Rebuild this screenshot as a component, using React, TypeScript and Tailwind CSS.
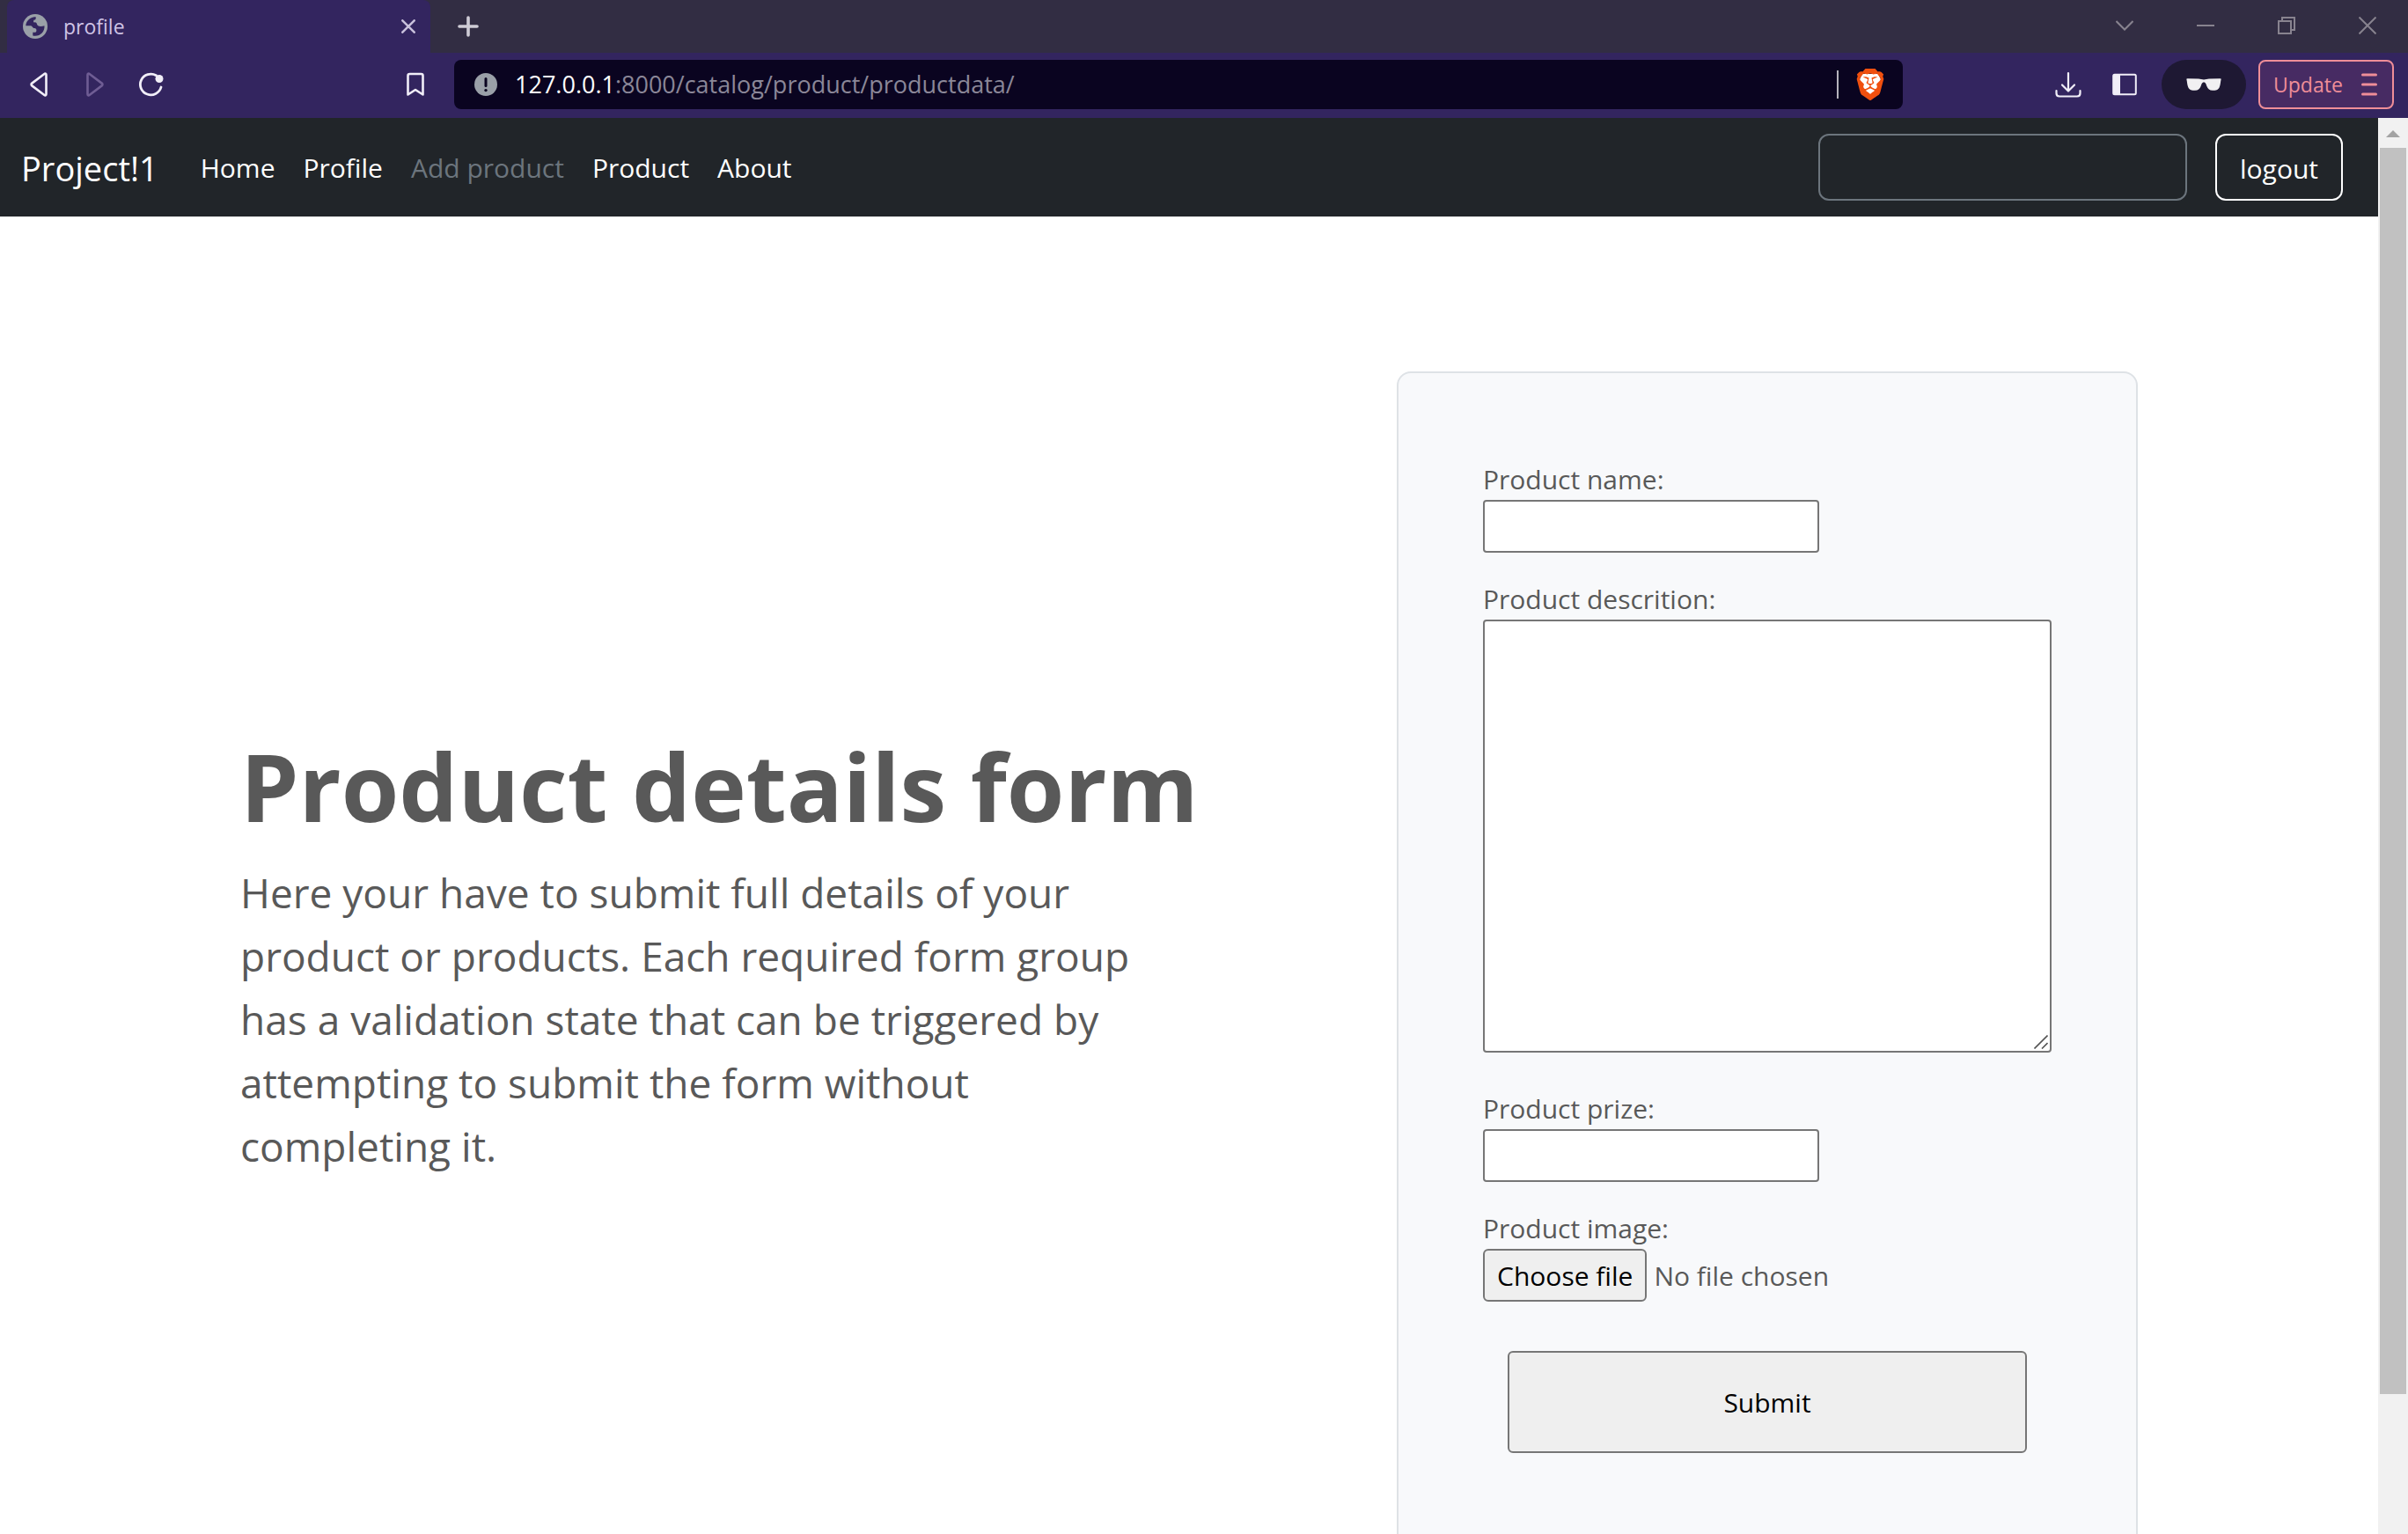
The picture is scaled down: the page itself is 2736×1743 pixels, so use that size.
import React from "react";
import { SiBrave } from "react-icons/si";

function GlobeIcon() {
  return (
    <svg viewBox="0 0 28 28" className="size-7" aria-hidden="true">
      <circle cx="14" cy="14" r="14" fill="#9aa0a8" />
      <path
        d="M3.3 13.2C3.6 8.500 7.200 4.400 12 3.500C13 3.300 14 3.300 14.800 3.400L14.600 5.200C14.500 6.300 13.600 6.600 12.300 6.700L12 9.200L14.800 9.500C16.200 10 15.600 12.400 17.200 13.200C19.600 14.400 22 13.800 24.500 13.200C25 19.500 20.200 24.800 14 24.800C12.600 24.800 11.600 24.600 11.300 24.500V20.800H14.200C15.400 20.400 15.600 18.800 15.300 17.600C15 16.400 13.600 16 12.400 16C11.200 15.900 10.800 13.600 9 13.300Z"
        fill="#33255f"
      />
    </svg>
  );
}

function ReloadIcon() {
  return (
    <svg viewBox="0 0 28 28" className="size-7" fill="none" aria-hidden="true">
      <path d="M25 17A12 11.800 0 1 1 19.500 3.800" stroke="#f1eef8" strokeWidth="2.800" strokeLinecap="round" />
      <circle cx="23" cy="7.500" r="4.500" fill="#f1eef8" />
    </svg>
  );
}

function TriangleIcon({ className }: { className: string }) {
  return (
    <svg viewBox="0 0 20 28" className={className} fill="none" aria-hidden="true">
      <path
        d="M18.500 3V25C18.500 26.200 17.300 26.700 16.400 26L2.300 15.400C1.300 14.600 1.300 13.400 2.300 12.600L16.400 2C17.300 1.300 18.500 1.800 18.500 3Z"
        stroke="currentColor"
        strokeWidth="2.600"
        strokeLinejoin="round"
      />
    </svg>
  );
}

function BookmarkIcon() {
  return (
    <svg viewBox="0 0 20 28" className="h-7 w-5" fill="none" aria-hidden="true">
      <path d="M1.500 25.500V4Q1.500 2 3.500 2H16.500Q18.500 2 18.500 4V25.500L10 20Z" stroke="#f1eef8" strokeWidth="2.600" strokeLinejoin="round" />
    </svg>
  );
}

function InfoIcon() {
  return (
    <svg viewBox="0 0 26 26" className="size-[26px] shrink-0" aria-hidden="true">
      <circle cx="13" cy="13" r="13" fill="#9aa0a8" />
      <path d="M13 6.500V14.500" stroke="#0a0420" strokeWidth="3" strokeLinecap="round" />
      <circle cx="13" cy="19.600" r="1.700" fill="#0a0420" />
    </svg>
  );
}

function BraveLogo() {
  return (
    <span className="relative block h-9 w-9 shrink-0 text-[#f0500f]">
      <svg viewBox="0 0 24 24" className="absolute inset-0 size-9" aria-hidden="true">
        <path d="M6 4H18L20 8L17.500 17L12 21L6.500 17L4 8Z" fill="#fff" />
      </svg>
      <SiBrave className="absolute inset-0 size-9" aria-hidden="true" />
    </span>
  );
}

function DownloadIcon() {
  return (
    <svg viewBox="0 0 30 30" className="size-[30px]" fill="none" stroke="#f1eef8" strokeWidth="2.200" strokeLinecap="round" strokeLinejoin="round" aria-hidden="true">
      <path d="M15 2V22M8 15.500L15 22.500L22 15.500M1.500 22V25Q1.500 28.500 5 28.500H25Q28.500 28.500 28.500 25V22" />
    </svg>
  );
}

function SidebarIcon() {
  return (
    <svg viewBox="0 0 28 26" className="h-[26px] w-7" aria-hidden="true">
      <rect x="1.200" y="1.700" width="25.600" height="22.600" rx="1.500" fill="none" stroke="#f1eef8" strokeWidth="2" />
      <rect x="1" y="1.500" width="8" height="23" fill="#f1eef8" />
    </svg>
  );
}

function GlassesIcon() {
  return (
    <svg viewBox="0 0 40 14" className="h-[14px] w-10" fill="#f1f0f2" aria-hidden="true">
      <path d="M0.300 0.800Q0.400 0.200 1.500 0.200L14 0.400Q17 0.700 20 1.600Q23 0.700 26 0.400L38.500 0.200Q39.600 0.200 39.700 0.800L39.200 3.200C38.900 6 38.400 8.500 37.700 10.200C36.400 13.300 33.500 13.800 30 13.800C26.500 13.800 24.600 11.800 23.400 9C22.600 7 22.300 4.400 20 4.400C17.700 4.400 17.400 7 16.600 9C15.400 11.800 13.500 13.800 10 13.800C6.500 13.800 3.600 13.300 2.300 10.200C1.600 8.500 1.100 6 0.800 3.200Z" />
    </svg>
  );
}

function TabStrip() {
  return (
    <div className="flex h-[60px] items-stretch bg-[#322d43]">
      <div className="ml-2 flex w-[481px] items-center rounded-t-lg bg-[#33255f] pr-[17px] pl-[18px]">
        <GlobeIcon />
        <span className="ml-[18px] flex-1 text-[23px] font-medium text-[#cfc3e6]">profile</span>
        <button type="button" aria-label="Close tab" className="text-[#c9c1dc]">
          <svg viewBox="0 0 16 16" className="size-4" fill="none" stroke="currentColor" strokeWidth="2.500" strokeLinecap="round" aria-hidden="true">
            <path d="M1.300 1.300L14.700 14.700M14.700 1.300L1.300 14.700" />
          </svg>
        </button>
      </div>
      <button type="button" aria-label="New tab" className="ml-[31px] text-[#cfccd6]">
        <svg viewBox="0 0 24 24" className="size-6" fill="none" stroke="currentColor" strokeWidth="3.600" strokeLinecap="round" aria-hidden="true">
          <path d="M12 2V22M2 12H22" />
        </svg>
      </button>
      <div className="ml-auto flex items-center gap-[72px] pr-9 pb-0.5 text-[#88838f]">
        <button type="button" aria-label="Search tabs">
          <svg viewBox="0 0 20 20" className="size-5" fill="none" stroke="currentColor" strokeWidth="2" aria-hidden="true">
            <path d="M0.500 5L10 14.500L19.500 5" />
          </svg>
        </button>
        <button type="button" aria-label="Minimize">
          <svg viewBox="0 0 20 20" className="size-5" stroke="currentColor" strokeWidth="2" aria-hidden="true">
            <path d="M0 10H20" />
          </svg>
        </button>
        <button type="button" aria-label="Restore">
          <svg viewBox="0 0 20 20" className="size-5" fill="none" stroke="currentColor" strokeWidth="2" aria-hidden="true">
            <path d="M1 5H15V19H1ZM5 5V1H19V15H15" />
          </svg>
        </button>
        <button type="button" aria-label="Close">
          <svg viewBox="0 0 20 20" className="size-5" fill="none" stroke="currentColor" strokeWidth="2" aria-hidden="true">
            <path d="M0.500 0.500L19.500 19.500M19.500 0.500L0.500 19.500" />
          </svg>
        </button>
      </div>
    </div>
  );
}

function Toolbar() {
  return (
    <div className="flex h-[74px] items-center bg-[#33255f] pr-4 pb-0.5 pl-[34px]">
      <button type="button" aria-label="Back" className="text-[#f1eef8]">
        <TriangleIcon className="h-7 w-5" />
      </button>
      <button type="button" aria-label="Forward" className="ml-11 text-[#6f5d94]">
        <TriangleIcon className="h-7 w-5 -scale-x-100" />
      </button>
      <button type="button" aria-label="Reload" className="ml-10">
        <ReloadIcon />
      </button>
      <div className="flex-[16]" />
      <button type="button" aria-label="Bookmark this page">
        <BookmarkIcon />
      </button>
      <div className="ml-[34px] flex h-14 flex-[93] items-center rounded-lg bg-[#0a0420] pr-[19px] pl-[23px]">
        <InfoIcon />
        <p className="ml-5 flex-1 text-[27px] text-[#8b8798]">
          <span className="text-white">127.0.0.1</span>:8000/catalog/product/productdata/
        </p>
        <span className="mr-[18px] h-8 w-0.5 bg-[#b5b3bc]" />
        <BraveLogo />
      </div>
      <div className="flex-[10]" />
      <button type="button" aria-label="Downloads">
        <DownloadIcon />
      </button>
      <button type="button" aria-label="Sidebar" className="ml-[35px]">
        <SidebarIcon />
      </button>
      <span className="ml-7 flex h-14 w-24 items-center justify-center rounded-full bg-[#1e1833]">
        <GlassesIcon />
      </span>
      <button
        type="button"
        className="ml-[14px] flex h-14 w-[154px] items-center justify-between rounded-lg border-2 border-[#ef8e98] bg-[#472b63] pr-[17px] pl-[15px] text-[23px] text-[#ef8e98]"
      >
        Update
        <svg viewBox="0 0 18 26" className="h-[26px] w-[18px]" stroke="currentColor" strokeWidth="3" strokeLinecap="round" aria-hidden="true">
          <path d="M1.500 2H16.500M1.500 13H16.500M1.500 24H16.500" />
        </svg>
      </button>
    </div>
  );
}

const links = [
  { label: "Home", disabled: false },
  { label: "Profile", disabled: false },
  { label: "Add product", disabled: true },
  { label: "Product", disabled: false },
  { label: "About", disabled: false },
];

function Navbar() {
  return (
    <nav className="flex h-28 items-center bg-[#212529] pr-10 pl-6 text-white">
      <a href="#" className="pt-0.5 text-[38px] leading-[60px]">
        Project!1
      </a>
      <ul className="ml-12 flex gap-8 pt-0.5 text-[30px] leading-12">
        {links.map((l) => (
          <li key={l.label}>
            <a href="#" className={l.disabled ? "text-[#6c757d]" : "text-white"}>
              {l.label}
            </a>
          </li>
        ))}
      </ul>
      <form className="ml-auto flex gap-8" onSubmit={(e) => e.preventDefault()}>
        <input type="search" aria-label="Search" className="h-19 w-[419px] rounded-xl border-2 border-[#6c757d] bg-transparent px-6 text-[30px]" />
        <button type="button" className="h-19 min-w-[145px] rounded-xl border-2 border-white px-5 pt-0.5 text-[30px]">
          logout
        </button>
      </form>
    </nav>
  );
}

const fieldClass = "block rounded-sm border-2 border-[#767676] bg-white px-2 text-[30px] text-black";
const labelClass = "block w-fit pt-0.5 text-[30px] leading-[46px]";

function ProductForm() {
  return (
    <form
      className="w-[842px] shrink-0 rounded-2xl border-2 border-[#dee2e6] bg-[#f8f9fb] px-24 pt-24 pb-28"
      onSubmit={(e) => e.preventDefault()}
    >
      <label htmlFor="name" className={labelClass}>
        Product name:
      </label>
      <input id="name" type="text" className={`${fieldClass} h-15 w-[382px]`} />

      <label htmlFor="description" className={`${labelClass} mt-7`}>
        Product descrition:
      </label>
      <div className="relative">
        <textarea id="description" className={`${fieldClass} h-[492px] w-full resize-none`} />
        <svg viewBox="0 0 16 16" className="absolute right-1 bottom-1 size-4" stroke="#555" strokeWidth="1.600" aria-hidden="true">
          <path d="M0.500 15.500L15.500 0.500M9 15.500L15.500 9" />
        </svg>
      </div>

      <label htmlFor="prize" className={`${labelClass} mt-[39px]`}>
        Product prize:
      </label>
      <input id="prize" type="text" className={`${fieldClass} h-15 w-[382px]`} />

      <label htmlFor="image" className={`${labelClass} mt-7`}>
        Product image:
      </label>
      <div className="flex items-center gap-2 text-[30px]">
        <input id="image" type="file" className="sr-only" />
        <label
          htmlFor="image"
          className="flex h-15 items-center rounded-md border-2 border-[#767676] bg-[#efefef] px-[14px] text-black"
        >
          Choose file
        </label>
        <span>No file chosen</span>
      </div>

      <div className="mt-14 px-7">
        <button type="submit" className="h-29 w-full rounded-md border-2 border-[#767676] bg-[#efefef] text-[30px] text-black">
          Submit
        </button>
      </div>
    </form>
  );
}

function Scrollbar() {
  return (
    <div className="flex w-[34px] shrink-0 flex-col items-center bg-[#f1f1f1]" aria-hidden="true">
      <svg viewBox="0 0 34 34" className="size-[34px]">
        <path d="M9 22L17 14L25 22Z" fill="#a3a3a3" />
      </svg>
      <div className="h-[88%] w-[30px] bg-[#c1c1c1]" />
    </div>
  );
}

export default function App() {
  return (
    <div className="flex h-screen flex-col overflow-hidden bg-white font-['Open_Sans','Noto_Sans',sans-serif] text-[#595959]">
      <TabStrip />
      <Toolbar />
      <div className="flex min-h-0 flex-1">
        <div className="min-w-0 flex-1 overflow-hidden">
          <Navbar />
          <main className="mx-auto flex w-full max-w-[2156px] items-center justify-between pt-44">
            <section className="pb-6">
              <h1 className="mb-[18px] text-[106px] leading-[134px] font-bold">Product details form</h1>
              <p className="max-w-[1050px] text-[46px] leading-18">
                Here your have to submit full details of your product or products. Each required form group has a
                validation state that can be triggered by attempting to submit the form without completing it.
              </p>
            </section>
            <ProductForm />
          </main>
        </div>
        <Scrollbar />
      </div>
    </div>
  );
}
